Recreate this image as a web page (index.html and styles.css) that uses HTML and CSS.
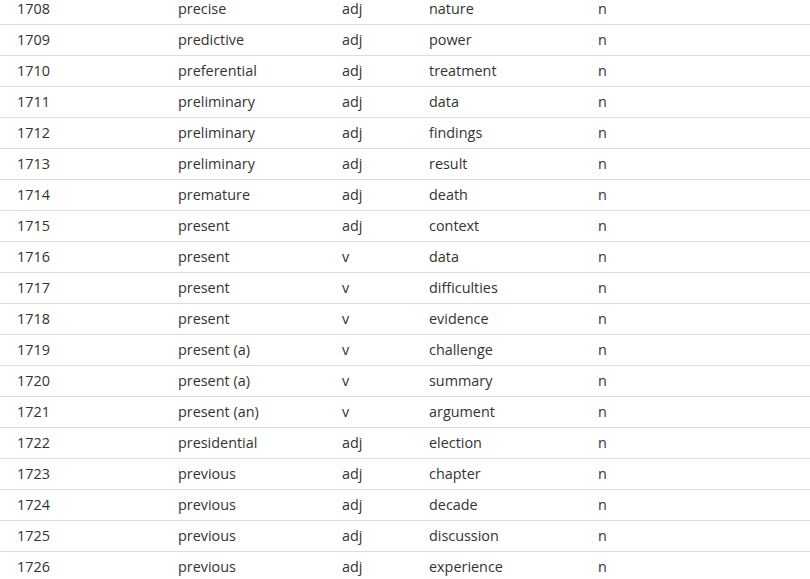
FILE: index.html
```html
<!DOCTYPE html>
<html>
<head>
<meta charset="utf-8">
<link rel="stylesheet" href="styles.css">
</head>
<body>
<div class="table">
  <div class="row"><div>1708</div><div>precise</div><div>adj</div><div>nature</div><div>n</div></div>
  <div class="row"><div>1709</div><div>predictive</div><div>adj</div><div>power</div><div>n</div></div>
  <div class="row"><div>1710</div><div>preferential</div><div>adj</div><div>treatment</div><div>n</div></div>
  <div class="row"><div>1711</div><div>preliminary</div><div>adj</div><div>data</div><div>n</div></div>
  <div class="row"><div>1712</div><div>preliminary</div><div>adj</div><div>findings</div><div>n</div></div>
  <div class="row"><div>1713</div><div>preliminary</div><div>adj</div><div>result</div><div>n</div></div>
  <div class="row"><div>1714</div><div>premature</div><div>adj</div><div>death</div><div>n</div></div>
  <div class="row"><div>1715</div><div>present</div><div>adj</div><div>context</div><div>n</div></div>
  <div class="row"><div>1716</div><div>present</div><div>v</div><div>data</div><div>n</div></div>
  <div class="row"><div>1717</div><div>present</div><div>v</div><div>difficulties</div><div>n</div></div>
  <div class="row"><div>1718</div><div>present</div><div>v</div><div>evidence</div><div>n</div></div>
  <div class="row"><div>1719</div><div>present (a)</div><div>v</div><div>challenge</div><div>n</div></div>
  <div class="row"><div>1720</div><div>present (a)</div><div>v</div><div>summary</div><div>n</div></div>
  <div class="row"><div>1721</div><div>present (an)</div><div>v</div><div>argument</div><div>n</div></div>
  <div class="row"><div>1722</div><div>presidential</div><div>adj</div><div>election</div><div>n</div></div>
  <div class="row"><div>1723</div><div>previous</div><div>adj</div><div>chapter</div><div>n</div></div>
  <div class="row"><div>1724</div><div>previous</div><div>adj</div><div>decade</div><div>n</div></div>
  <div class="row"><div>1725</div><div>previous</div><div>adj</div><div>discussion</div><div>n</div></div>
  <div class="row"><div>1726</div><div>previous</div><div>adj</div><div>experience</div><div>n</div></div>
</div>
</body>
</html>
```
FILE: styles.css
```css
html, body {
  margin: 0;
  padding: 0;
  background: #fff;
  overflow: hidden;
}
body {
  font-family: "Open Sans", "Noto Sans", sans-serif;
  font-size: 14.4px;
  color: #333;
}
.table {
  margin-top: -7px;
}
.row {
  display: grid;
  grid-template-columns: 161px 164px 87px 169px 1fr;
  border-top: 1px solid #dddddd;
  height: 30px;
  line-height: 30px;
}
.row > div {
  padding-left: 17px;
  white-space: nowrap;
}
```
